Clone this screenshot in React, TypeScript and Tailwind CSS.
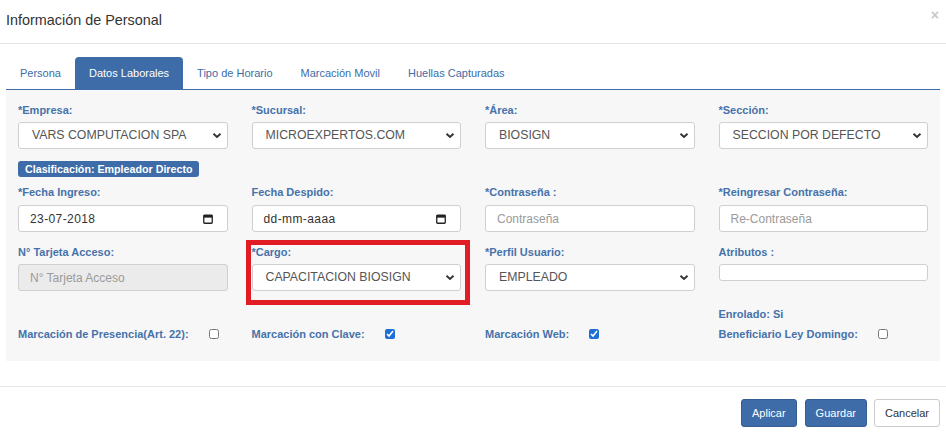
import type { ReactNode } from 'react'

const tabs = ['Persona', 'Datos Laborales', 'Tipo de Horario', 'Marcación Movil', 'Huellas Capturadas']

function Chevron() {
  return (
    <svg width="10" height="7" viewBox="0 0 10 7" className="shrink-0">
      <path d="M1.5 1.7 5 5 8.5 1.7" fill="none" stroke="#333" strokeWidth="1.9" />
    </svg>
  )
}

function CalendarIcon() {
  return (
    <svg width="10" height="10" viewBox="0 0 10 10" className="shrink-0">
      <rect x="0.75" y="1.25" width="8.5" height="8" fill="none" stroke="#222" strokeWidth="1.3" rx="0.8" />
      <rect x="0.75" y="1.25" width="8.5" height="2.4" fill="#222" />
    </svg>
  )
}

function Label({ children }: { children: ReactNode }) {
  return <p className="h-4 leading-4 text-[11px] font-bold text-[#4672aa] whitespace-nowrap">{children}</p>
}

function Select({ value }: { value: string }) {
  return (
    <div className="h-[27px] flex items-center justify-between pl-[13px] pr-[5px] bg-white border border-[#cfcfcf] rounded-[3px] text-[12.3px] text-[#555]">
      <span>{value}</span>
      <Chevron />
    </div>
  )
}

function DateInput({ value }: { value: string }) {
  return (
    <div className="h-[27px] flex items-center justify-between pl-[11px] pr-[14px] bg-white border border-[#cfcfcf] rounded-[3px] text-[12px] text-[#333] tracking-[0.4px]">
      <span>{value}</span>
      <CalendarIcon />
    </div>
  )
}

function TextInput({ placeholder, disabled }: { placeholder: string; disabled?: boolean }) {
  return (
    <div className={`h-[27px] flex items-center pl-[11px] border border-[#cfcfcf] rounded-[3px] text-[12px] text-[#9a9a9a] ${disabled ? 'bg-[#ebebeb]' : 'bg-white'}`}>
      {placeholder}
    </div>
  )
}

function Check({ label, checked }: { label: string; checked?: boolean }) {
  return (
    <div className="flex items-center h-4">
      <span className="text-[11px] font-bold text-[#4672aa] whitespace-nowrap">{label}</span>
      <input type="checkbox" defaultChecked={checked} className="m-0 ml-[20px] w-[10px] h-[10px] accent-[#1d6fd6]" />
    </div>
  )
}

export default function App() {
  return (
    <div className="w-[946px] h-[436px] bg-white overflow-hidden font-['Liberation_Sans',Arial,sans-serif] text-[#333]">
      {/* header */}
      <div className="h-[44px] flex items-center justify-between pl-[6px] pr-[7px] border-b border-[#e5e5e5]">
        <h4 className="text-[14.4px] leading-none -mt-[3px]">Información de Personal</h4>
        <span className="text-[14px] font-bold leading-none text-[#c8c8c8] -mt-[14px]">×</span>
      </div>

      <div className="px-[6px] pt-[13px]">
        {/* tabs */}
        <div className="flex h-[33px] border-b border-[#3d6ca8]">
          {tabs.map(t => (
            <div key={t}
              className={`px-[14px] h-[32px] leading-[32px] text-[11px] rounded-t-[4px] ${t === 'Datos Laborales' ? 'bg-[#3d6ca8] text-white' : 'text-[#3d6ca8]'}`}>
              {t}
            </div>
          ))}
        </div>

        {/* form panel */}
        <div className="h-[271px] bg-[#f7f7f7] pt-3">
          <div className="grid grid-cols-4">
            <div className="px-3"><Label>*Empresa:</Label><div className="mt-1"><Select value="VARS COMPUTACION SPA" /></div></div>
            <div className="px-3"><Label>*Sucursal:</Label><div className="mt-1"><Select value="MICROEXPERTOS.COM" /></div></div>
            <div className="px-3"><Label>*Área:</Label><div className="mt-1"><Select value="BIOSIGN" /></div></div>
            <div className="px-3"><Label>*Sección:</Label><div className="mt-1"><Select value="SECCION POR DEFECTO" /></div></div>
          </div>

          <div className="px-3 mt-3 flex">
            <span className="h-4 leading-4 px-[7px] rounded-[3px] bg-[#3d6ca8] text-white text-[10.7px] font-bold">Clasificación: Empleador Directo</span>
          </div>

          <div className="grid grid-cols-4 mt-[7px]">
            <div className="px-3"><Label>*Fecha Ingreso:</Label><div className="mt-[5px]"><DateInput value="23-07-2018" /></div></div>
            <div className="px-3"><Label>Fecha Despido:</Label><div className="mt-[5px]"><DateInput value="dd-mm-aaaa" /></div></div>
            <div className="px-3"><Label>*Contraseña :</Label><div className="mt-[5px]"><TextInput placeholder="Contraseña" /></div></div>
            <div className="px-3"><Label>*Reingresar Contraseña:</Label><div className="mt-[5px]"><TextInput placeholder="Re-Contraseña" /></div></div>
          </div>

          <div className="grid grid-cols-4 mt-3">
            <div className="px-3"><Label>N° Tarjeta Acceso:</Label><div className="mt-1"><TextInput placeholder="N° Tarjeta Acceso" disabled /></div></div>
            <div className="px-3">
              <div className="relative">
                <Label>*Cargo:</Label>
                <div className="mt-1"><Select value="CAPACITACION BIOSIGN" /></div>
                <div className="absolute -left-[6px] -right-[9px] -top-[4px] -bottom-[14px] border-[5px] border-[#e21c25] pointer-events-none" />
              </div>
            </div>
            <div className="px-3"><Label>*Perfil Usuario:</Label><div className="mt-1"><Select value="EMPLEADO" /></div></div>
            <div className="px-3">
              <Label>Atributos :</Label>
              <div className="mt-1 h-[17px] bg-white border border-[#cfcfcf] rounded-[3px]" />
            </div>
          </div>

          <div className="grid grid-cols-4 mt-[15px]">
            <div className="col-start-4 px-3"><Label>Enrolado: Si</Label></div>
          </div>
          <div className="grid grid-cols-4 mt-1">
            <div className="px-3"><Check label="Marcación de Presencia(Art. 22):" /></div>
            <div className="px-3"><Check label="Marcación con Clave:" checked /></div>
            <div className="px-3"><Check label="Marcación Web:" checked /></div>
            <div className="px-3"><Check label="Beneficiario Ley Domingo:" /></div>
          </div>
        </div>
      </div>

      {/* footer */}
      <div className="mt-[25px] border-t border-[#e5e5e5] pt-3 px-[6px] flex justify-end">
        <button className="h-[28px] px-[10px] rounded-[3px] bg-[#3d6ca8] border border-[#335d93] text-white text-[11px]">Aplicar</button>
        <button className="ml-[8px] h-[28px] px-[10px] rounded-[3px] bg-[#3d6ca8] border border-[#335d93] text-white text-[11px]">Guardar</button>
        <button className="ml-[7px] h-[28px] px-[10px] rounded-[3px] bg-white border border-[#cccccc] text-[#333] text-[11px]">Cancelar</button>
      </div>
    </div>
  )
}
